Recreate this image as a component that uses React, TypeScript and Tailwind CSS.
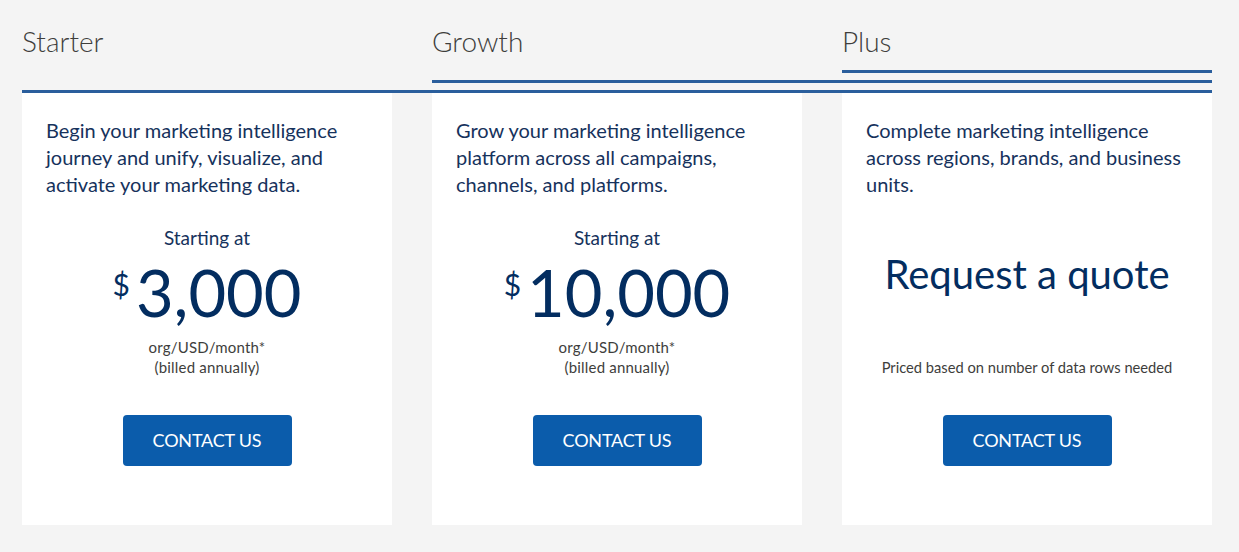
import React from "react";

const navy = "text-[#032d60]";
const desc = "text-[#16325c]";

function Price({ amount }: { amount: string }) {
  return (
    <>
      <div className={`mt-[26px] text-center text-[19px] leading-[27px] ${desc}`}>Starting at</div>
      <div className={`mt-[5px] flex justify-center items-start ${navy}`}>
        <span className="text-[30px] leading-none mt-[13px] mr-[6px]">$</span>
        <span className="text-[65px] leading-[72px]">{amount}</span>
      </div>
      <div className="mt-[9px] text-center text-[15px] leading-[20px] text-[#3e3e3c] tracking-[0.2px]">
        <div>org/USD/month*</div>
        <div>(billed annually)</div>
      </div>
    </>
  );
}

function Button() {
  return (
    <div className="mt-[38px] flex justify-center">
      <button className="w-[169px] h-[51px] rounded-[4px] bg-[#0b5cab] text-white text-[18px] uppercase tracking-[-0.2px]">
        Contact us
      </button>
    </div>
  );
}

function Card({ text, children }: { text: string; children: React.ReactNode }) {
  return (
    <div className="bg-white h-[432px] pt-[24px] px-[24px]">
      <p className={`text-[20px] leading-[27px] ${desc}`}>{text}</p>
      {children}
      <Button />
    </div>
  );
}

export default function App() {
  return (
    <div className="min-h-screen bg-[#f4f4f4]" style={{ fontFamily: "Lato, 'Liberation Sans', sans-serif" }}>
      <div className="ml-[22px] w-[1190px] pt-[24px]">
        <div className="grid grid-cols-3 gap-[40px] text-[28px] leading-[34px] font-light text-[#3e3e3c]">
          <div>Starter</div>
          <div>Growth</div>
          <div>Plus</div>
        </div>
        <div className="mt-[12px] ml-[820px] h-[3px] bg-[#2a5e9c]" />
        <div className="mt-[7px] ml-[410px] h-[3px] bg-[#2a5e9c]" />
        <div className="mt-[7px] h-[3px] bg-[#2a5e9c]" />
        <div className="grid grid-cols-3 gap-[40px]">
          <Card text="Begin your marketing intelligence journey and unify, visualize, and activate your marketing data.">
            <Price amount="3,000" />
          </Card>
          <Card text="Grow your marketing intelligence platform across all campaigns, channels, and platforms.">
            <Price amount="10,000" />
          </Card>
          <Card text="Complete marketing intelligence across regions, brands, and business units.">
            <div className={`mt-[52px] text-center text-[40px] leading-[48px] ${navy}`}>Request a quote</div>
            <div className="mt-[59px] text-center text-[14.7px] leading-[20px] text-[#3e3e3c]">
              Priced based on number of data rows needed
            </div>
          </Card>
        </div>
      </div>
    </div>
  );
}
